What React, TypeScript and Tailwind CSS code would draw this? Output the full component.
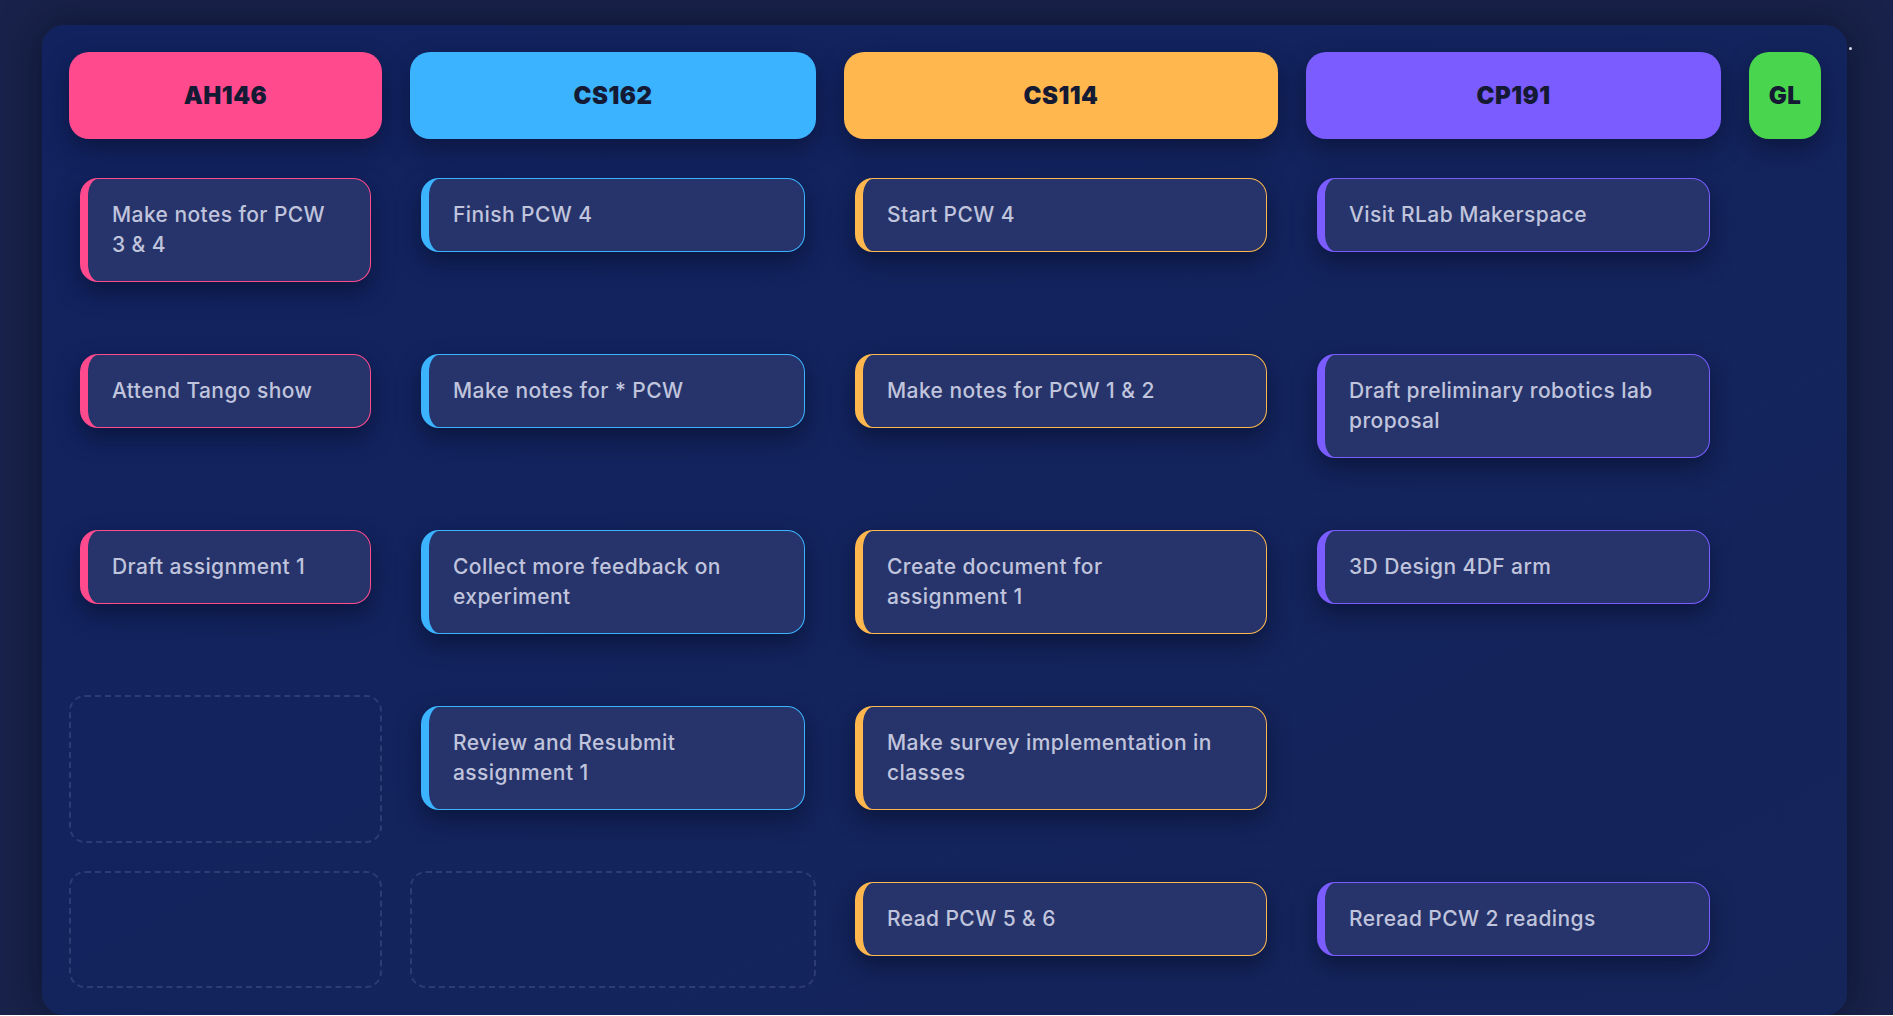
import React from "react";

type Cell = string[] | "slot" | null;

type Course = {
  code: string;
  header: string;
  border: string;
  items: Cell[];
};

const courses: Course[] = [
  {
    code: "AH146",
    header: "bg-[#ff4b8e]",
    border: "border-[#ff4b8e]",
    items: [["Make notes for PCW", "3 & 4"], ["Attend Tango show"], ["Draft assignment 1"], "slot", "slot"],
  },
  {
    code: "CS162",
    header: "bg-[#3bb3ff]",
    border: "border-[#3bb3ff]",
    items: [["Finish PCW 4"], ["Make notes for * PCW"], ["Collect more feedback on", "experiment"], ["Review and Resubmit", "assignment 1"], "slot"],
  },
  {
    code: "CS114",
    header: "bg-[#ffb74e]",
    border: "border-[#ffb74e]",
    items: [["Start PCW 4"], ["Make notes for PCW 1 & 2"], ["Create document for", "assignment 1"], ["Make survey implementation in", "classes"], ["Read PCW 5 & 6"]],
  },
  {
    code: "CP191",
    header: "bg-[#7a5cff]",
    border: "border-[#7a5cff]",
    items: [["Visit RLab Makerspace"], ["Draft preliminary robotics lab", "proposal"], ["3D Design 4DF arm"], null, ["Reread PCW 2 readings"]],
  },
  {
    code: "GL",
    header: "bg-[#4ad54f]",
    border: "border-[#4ad54f]",
    items: [null, null, null, null, null],
  },
];

function TaskCard({ lines, border }: { lines: string[]; border: string }) {
  return (
    <div
      className={`mx-[11px] mt-[11px] rounded-[18px] border border-l-8 ${border} bg-[#26346b] py-[21px] pl-6 pr-5 text-[21px] leading-[30px] font-medium tracking-[0.02em] text-[#c0c4dc] shadow-[0_10px_22px_rgba(6,12,40,0.55)]`}
    >
      {lines.map((l, i) => (
        <div key={i} className="whitespace-nowrap">
          {l}
        </div>
      ))}
    </div>
  );
}

export default function App() {
  return (
    <div
      className="relative h-[1015px] bg-[#19224a] pl-[42px] pr-[46px] pt-[25px]"
      style={{ fontFamily: "Inter, 'Open Sans', sans-serif" }}
    >
      <div className="absolute left-[1849px] top-[47px] h-[3px] w-[3px] rounded-full bg-[#d8dbe6]" />

      <div className="h-[990px] rounded-[22px] bg-gradient-to-br from-[#11225f] to-[#15255a] p-[27px] shadow-[0_0_40px_rgba(5,10,30,0.6)]">
        <div className="grid grid-flow-col grid-cols-[313px_406px_434px_415px_72px] grid-rows-[87px_148px_148px_148px_148px_117px] gap-x-[28px] gap-y-[28px]">
          {courses.map((c) => (
            <React.Fragment key={c.code}>
              <div
                className={`flex items-center justify-center rounded-[20px] ${c.header} text-[24px] font-black tracking-[0.02em] text-[#141a33] shadow-[0_10px_22px_rgba(6,12,40,0.5)]`}
              >
                {c.code}
              </div>
              {c.items.map((it, i) =>
                it === "slot" ? (
                  <div key={i} className="rounded-2xl border-2 border-dashed border-[#2d3c72]" />
                ) : it === null ? (
                  <div key={i} />
                ) : (
                  <div key={i} className="flex flex-col">
                    <TaskCard lines={it} border={c.border} />
                  </div>
                )
              )}
            </React.Fragment>
          ))}
        </div>
      </div>
    </div>
  );
}
